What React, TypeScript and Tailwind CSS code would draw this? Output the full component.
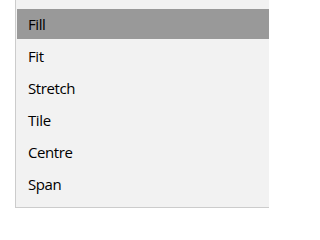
import React from "react";

const items = ["Fill", "Fit", "Stretch", "Tile", "Centre", "Span"];

export default function App() {
  return (
    <div className="w-[269px] h-[216px] bg-white overflow-hidden" style={{ fontFamily: '"Open Sans", "Noto Sans", sans-serif' }}>
      <div className="ml-[15px] w-[270px] border-l border-b border-[#cccccc] bg-[#f2f2f2] pt-2 pb-[7px]">
        {items.map((it, i) => (
          <div key={it} className="h-8 py-px pl-px">
            <div
              className={
                "h-full flex items-center pl-[11px] text-[15px] tracking-[-0.4px] text-black " +
                (i === 0 ? "bg-[#999999]" : "")
              }
            >
              {it}
            </div>
          </div>
        ))}
      </div>
    </div>
  );
}
